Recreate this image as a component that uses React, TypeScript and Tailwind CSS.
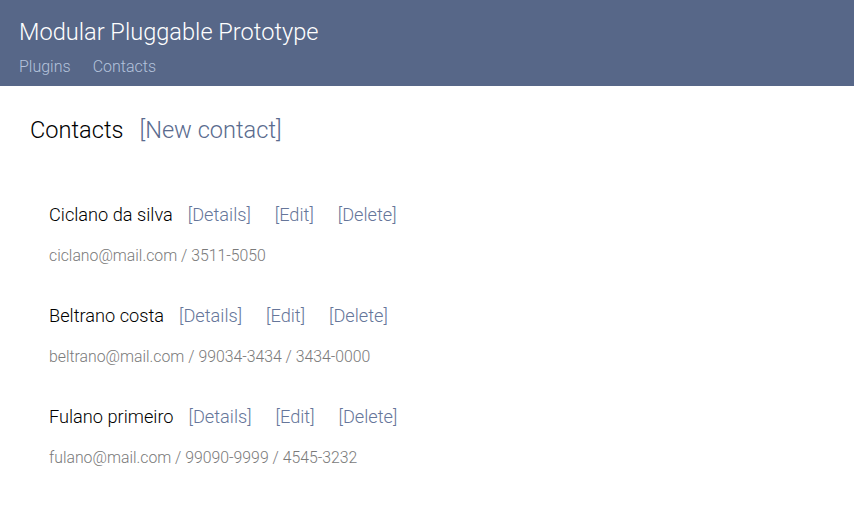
import React from "react";

const contacts = [
  { name: "Ciclano da silva", email: "ciclano@mail.com", phones: ["3511-5050"] },
  { name: "Beltrano costa", email: "beltrano@mail.com", phones: ["99034-3434", "3434-0000"] },
  { name: "Fulano primeiro", email: "fulano@mail.com", phones: ["99090-9999", "4545-3232"] },
];

export default function App() {
  return (
    <div className="min-h-[511px] bg-white font-light" style={{ fontFamily: "Roboto, 'Noto Sans', sans-serif" }}>
      <header className="h-[86px] bg-[#576788] pl-[19px] pt-[15px]">
        <h1 className="text-[23.6px] leading-[34px] text-white">Modular Pluggable Prototype</h1>
        <nav className="mt-[7px] flex gap-[22px] text-[16px] leading-[22px] text-[#b4c3dc]">
          <span>Plugins</span>
          <span>Contacts</span>
        </nav>
      </header>
      <main className="pl-[30px] pt-[27px]">
        <div className="flex items-baseline gap-[16px] text-[23.6px] leading-[34px]">
          <span className="text-black">Contacts</span>
          <span className="text-[#5a6b8e]">[New contact]</span>
        </div>
        <ul className="mt-[55px] pl-[19px]">
          {contacts.map((c) => (
            <li key={c.name} className="mb-[36px]">
              <div className="flex items-baseline text-[18.2px] leading-[26px]">
                <span className="text-black">{c.name}</span>
                <span className="ml-[15px] text-[#66769a]">[Details]</span>
                <span className="ml-[24px] text-[#66769a]">[Edit]</span>
                <span className="ml-[24px] text-[#66769a]">[Delete]</span>
              </div>
              <div className="mt-[17px] text-[15.8px] leading-[22px] text-[#7a7a7a]">
                {c.email}
                {c.phones.map((p) => (
                  <span key={p}> / {p}</span>
                ))}
              </div>
            </li>
          ))}
        </ul>
      </main>
    </div>
  );
}
